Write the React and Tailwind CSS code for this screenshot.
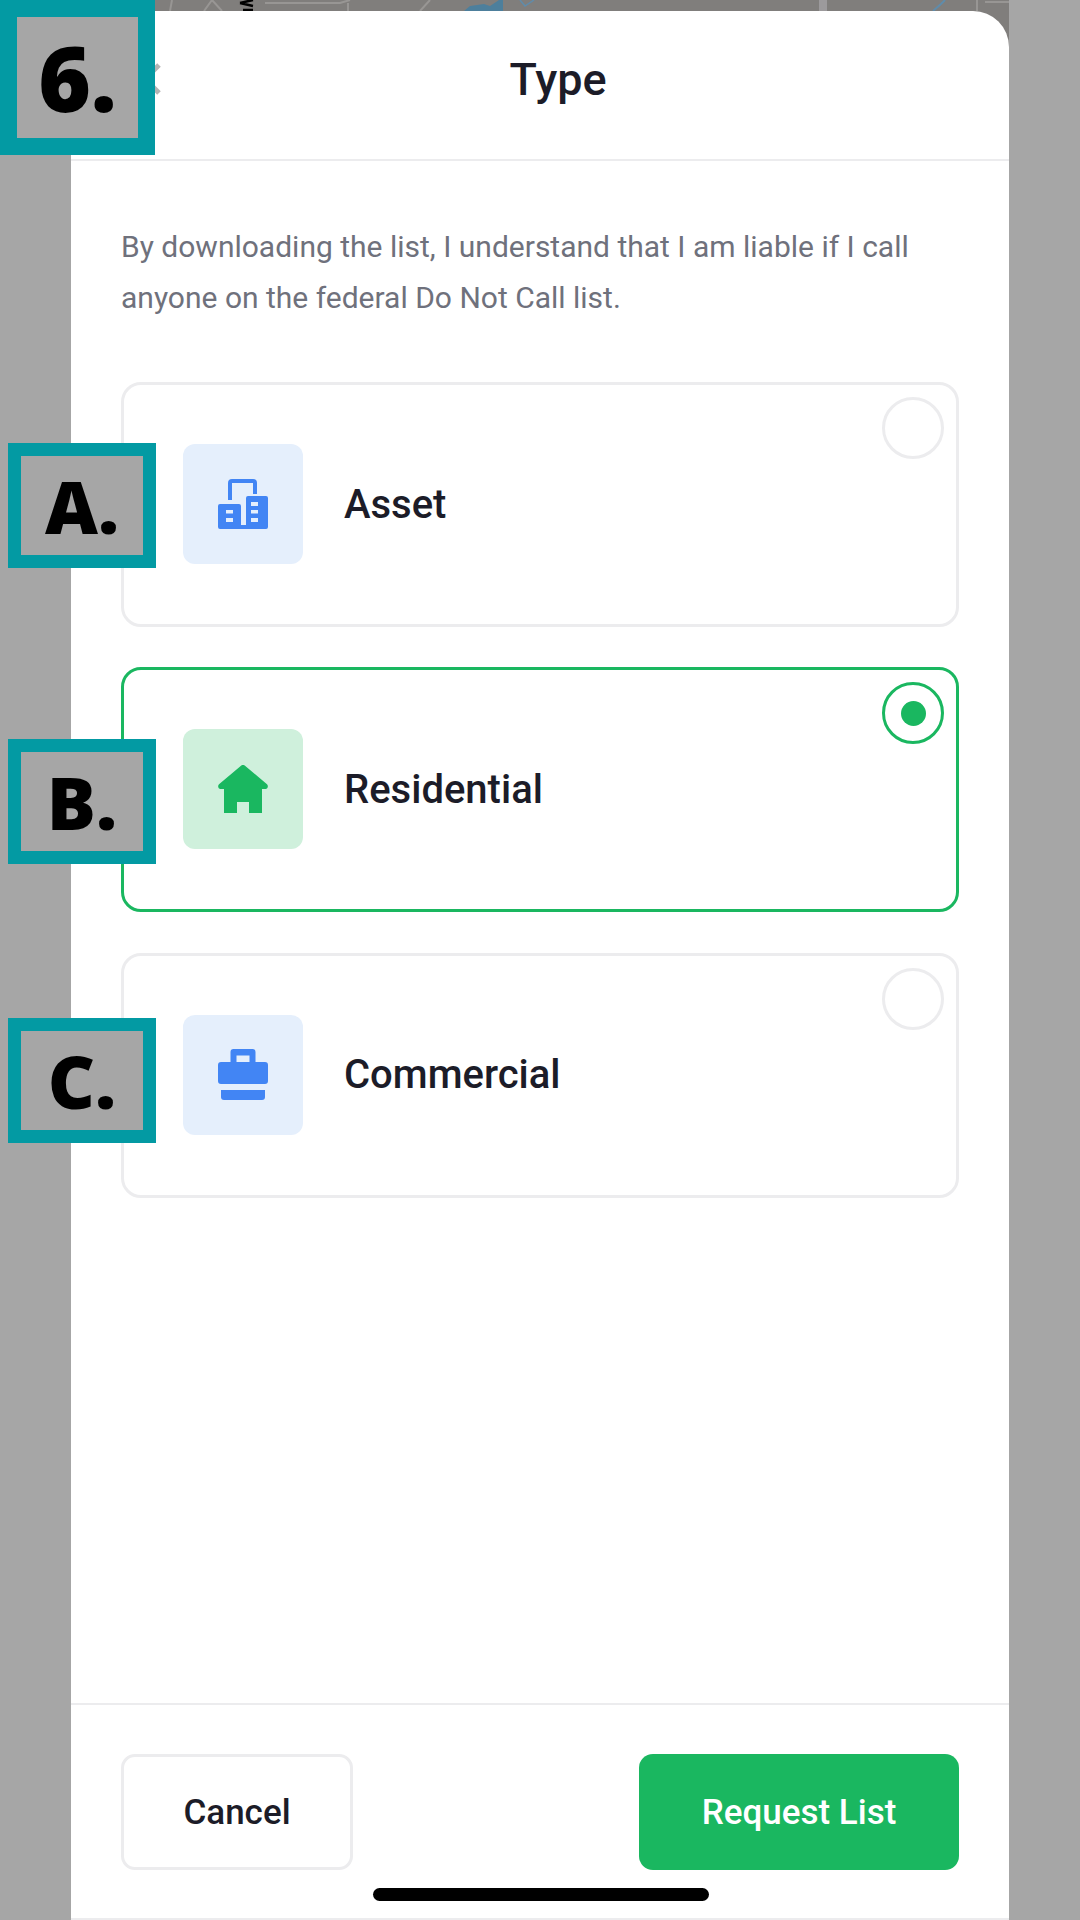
import React from 'react';

const BuildingIcon = () => (
  <svg width="50" height="50" viewBox="0 0 50 50" className="block">
    <path d="M12 21V4a2 2 0 0 1 2-2h21a2 2 0 0 1 2 2v11" fill="none" stroke="#4285f4" strokeWidth="4" />
    <path
      fill="#4285f4"
      d="M2 25h19a2 2 0 0 1 2 2v19h5V19a2 2 0 0 1 2-2h18a2 2 0 0 1 2 2v29a2 2 0 0 1-2 2H2a2 2 0 0 1-2-2V27a2 2 0 0 1 2-2z"
    />
    <path
      fill="#e5effc"
      d="M8 31h7v3.500H8zM8 39h7v4H8zM33 23h7v4h-7zM33 31h7v3.500h-7zM33 39h7v4h-7z"
    />
  </svg>
);

const HomeIcon = () => (
  <svg width="50" height="48" viewBox="0 0 50 48" className="block">
    <path
      fill="#1ab760"
      d="M23 .8a3 3 0 0 1 4 0l22 18.400c1.700 1.500.7 4.800-1.500 4.800H44v24H31V37H19v11H6V24H2.500C.3 24-.7 20.700 1 19.200z"
    />
  </svg>
);

const BriefcaseIcon = () => (
  <svg width="50" height="51" viewBox="0 0 50 51" className="block">
    <path
      fillRule="evenodd"
      fill="#4285f4"
      d="M12.500 3a3 3 0 0 1 3-3h19a3 3 0 0 1 3 3v10H47a3 3 0 0 1 3 3v16a3 3 0 0 1-3 3H3a3 3 0 0 1-3-3V16a3 3 0 0 1 3-3h9.500zM18.500 6.500V13h13V6.500z"
    />
    <path fill="#4285f4" d="M3 41h44v7a3 3 0 0 1-3 3H6a3 3 0 0 1-3-3z" />
  </svg>
);

// what shows of the map behind the sheet
const MapStrip = () => (
  <svg width="938" height="11" viewBox="71 0 938 11" className="block">
    <g fill="none" stroke="#989694" strokeWidth="2">
      <path d="M170 11L172 0M204 11L212 0 222 11M265 3H340L350 0M348 11V3M420 11L430 0" />
      <path d="M820 0V11M977 0V11M985 2H1009" />
    </g>
    <path d="M823 0V11" stroke="#9c9a9c" strokeWidth="8" />
    <path d="M464 11L470 6 484 4 490 6 499 0H503V11z" fill="#4d7f9c" />
    <path d="M520 0L525 6 534 0" fill="none" stroke="#5f8cab" strokeWidth="1.500" />
    <path d="M933 11L941 4 945 0" fill="none" stroke="#5f8cab" strokeWidth="2" />
    <path d="M240 3L253 0M240 3L253 6M243 10H253" fill="none" stroke="#000000" strokeWidth="2.500" />
  </svg>
);

const options = [
  { label: 'Asset', icon: <BuildingIcon />, selected: false },
  { label: 'Residential', icon: <HomeIcon />, selected: true },
  { label: 'Commercial', icon: <BriefcaseIcon />, selected: false },
];

const OptionCard = ({ label, icon, selected }) => (
  <div
    className={`relative h-[245px] rounded-[20px] border-[3px] bg-white pl-[59px] flex items-center ${
      selected ? 'border-[#1ab760]' : 'border-[#ececee]'
    }`}
  >
    <div
      className={`w-[120px] h-[120px] mb-[1px] rounded-[12px] flex items-center justify-center ${
        selected ? 'bg-[#cff0dc]' : 'bg-[#e5effc]'
      }`}
    >
      {icon}
    </div>
    <span className="ml-[41px] text-[40px] font-medium text-[#1c1c28]">{label}</span>
    <div
      className={`absolute top-[12px] right-[12px] w-[62px] h-[62px] rounded-full border-[3px] flex items-center justify-center ${
        selected ? 'border-[#1ab760]' : 'border-[#ececee]'
      }`}
    >
      {selected && <div className="w-[25px] h-[25px] rounded-full bg-[#1ab760]" />}
    </div>
  </div>
);

const Badge = ({ children, className }) => (
  <div
    className={`absolute flex items-center justify-center bg-[#a6a6a6] border-[#039aa3] font-['Open_Sans',sans-serif] font-extrabold text-black ${className}`}
  >
    {children}
  </div>
);

export default function App() {
  return (
    <div className="relative w-[1080px] h-[1920px] overflow-hidden bg-[#a6a6a6] font-['Roboto',sans-serif]">
      <div className="ml-[71px] w-[938px] h-[1920px] bg-[#807e7c]">
        <MapStrip />
        <div className="h-[1909px] bg-white rounded-t-[36px] flex flex-col">
          <div className="relative h-[150px] shrink-0 border-b-2 border-[#ececee] flex items-center justify-center pl-[36px] pb-[10px]">
            <svg width="40" height="40" viewBox="0 0 40 40" className="absolute left-[54px] top-[48px]">
              <path d="M6 6L34 34M34 6L6 34" stroke="#b4b4b4" strokeWidth="5" />
            </svg>
            <h1 className="text-[45px] font-medium text-[#1c1c28]">Type</h1>
          </div>

          <div className="flex-1 px-[50px] pt-[60px]">
            <p className="text-[30px] leading-[51px] text-[#6f717c]">
              By downloading the list, I understand that I am liable if I call
              <br />
              anyone on the federal Do Not Call list.
            </p>
            <div className="mt-[59px] flex flex-col gap-[40.4px]">
              {options.map((option) => (
                <OptionCard key={option.label} {...option} />
              ))}
            </div>
          </div>

          <div className="relative h-[217px] shrink-0 border-t-2 border-b-2 border-[#ececee] px-[50px] pt-[49px] flex justify-between items-start">
            <button className="w-[232px] h-[116px] pt-[2px] rounded-[14px] border-[3px] border-[#ececee] bg-white text-[35px] font-medium text-[#1c1c28]">
              Cancel
            </button>
            <button className="w-[320px] h-[116px] pt-[2px] rounded-[14px] bg-[#1ab760] text-[35px] font-medium text-white">
              Request List
            </button>
            <div className="absolute left-[302px] bottom-[17px] w-[336px] h-[13px] rounded-full bg-black" />
          </div>
        </div>
      </div>

      <Badge className="left-0 top-0 w-[155px] h-[155px] border-[17px] text-[90px]">6.</Badge>
      <Badge className="left-[8px] top-[443px] w-[148px] h-[125px] border-[13.500px] text-[73px]">A.</Badge>
      <Badge className="left-[8px] top-[739px] w-[148px] h-[125px] border-[13.500px] text-[73px]">B.</Badge>
      <Badge className="left-[8px] top-[1018px] w-[148px] h-[125px] border-[13.500px] text-[73px]">C.</Badge>
    </div>
  );
}
